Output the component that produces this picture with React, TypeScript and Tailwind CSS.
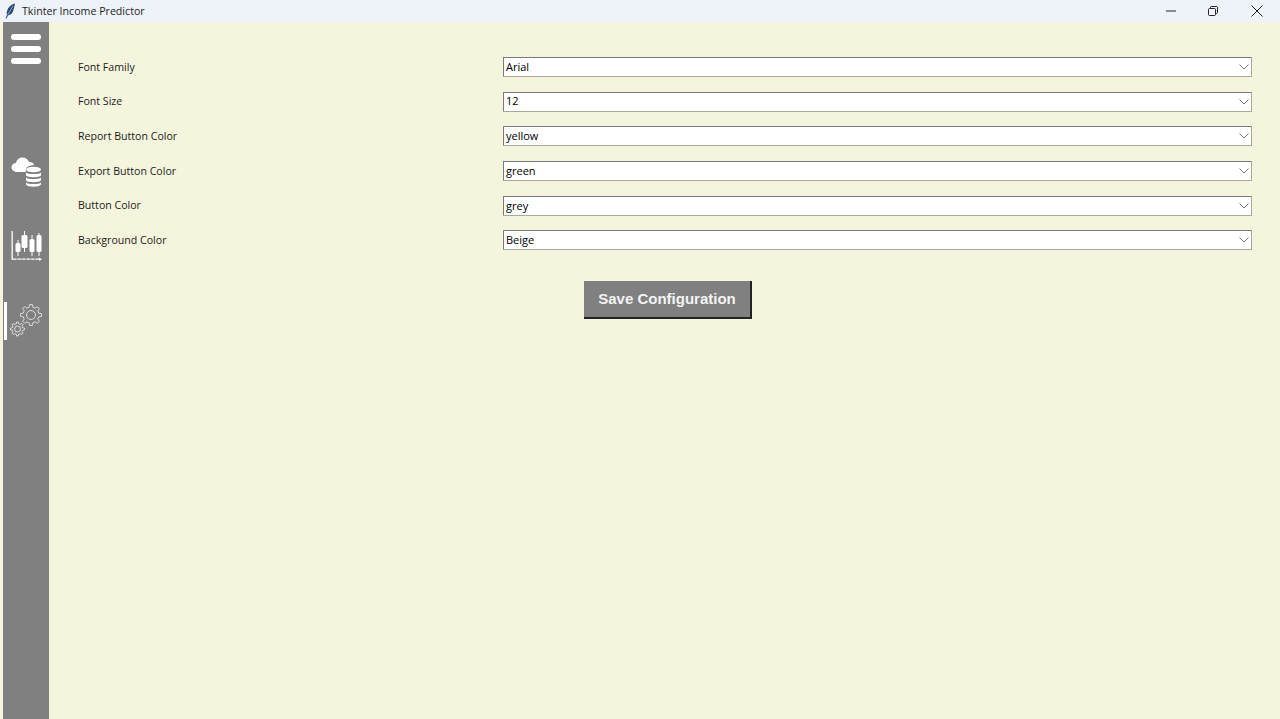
const fields = [
  { label: 'Font Family', value: 'Arial' },
  { label: 'Font Size', value: '12' },
  { label: 'Report Button Color', value: 'yellow' },
  { label: 'Export Button Color', value: 'green' },
  { label: 'Button Color', value: 'grey' },
  { label: 'Background Color', value: 'Beige' },
];

function Feather() {
  return (
    <svg width="12" height="16" viewBox="0 0 12 16">
      <path d="M11 0.5C7 1.5 4 4 3 8C2.6 9.8 2.6 11 3 12L1.5 15.5L2.5 15.5L4 12.5C7 12 9 9.5 9.8 6C10.2 4 10.8 2 11 0.5Z" fill="#2c4a78" />
      <path d="M9 3L3.5 12" stroke="#b9c7dc" strokeWidth="0.7" />
    </svg>
  );
}

function CloudDb() {
  return (
    <svg width="32" height="34" viewBox="0 0 32 34" fill="white">
      <path d="M6 18C2.5 18 0.5 15.800 0.500 13.300C0.500 10.800 2.500 9 5 9C5.700 5.500 8.500 3.500 11.500 3.500C14.500 3.500 17 5.300 18 8C20.500 7.800 22.500 9 23.200 11C18.500 11.300 15 13 14.800 15.500L14.800 18Z" />
      <ellipse cx="22.500" cy="15.500" rx="7.500" ry="2.800" />
      <path d="M15 18.500C16.500 20.500 28.500 20.500 30 18.500L30 21.500C28.500 23.800 16.500 23.800 15 21.500Z" />
      <path d="M15 23.500C16.500 25.500 28.500 25.500 30 23.500L30 26.500C28.500 28.800 16.500 28.800 15 26.500Z" />
      <path d="M15 28.500C16.500 30.500 28.500 30.500 30 28.500L30 30.500C28.500 33.500 16.500 33.500 15 30.500Z" />
    </svg>
  );
}

function Candles() {
  return (
    <svg width="32" height="32" viewBox="0 0 32 32" fill="white">
      <path d="M1.500 2H2.800V29.500H30V30.800H1.500Z" />
      <path d="M29 28.500L32 30.200L29 32Z" />
      <g stroke="white" strokeWidth="1">
        <path d="M8 11V27" />
        <path d="M14.500 2V23" />
        <path d="M22 6V27" />
        <path d="M29 4V27" />
      </g>
      <rect x="5.500" y="14" width="5" height="9" rx="1.500" />
      <rect x="11.500" y="6" width="6" height="13" rx="1.500" />
      <rect x="19.500" y="10" width="5" height="13" rx="1.500" />
      <rect x="26.500" y="6" width="5" height="17" rx="1.500" />
      <path d="M6 30H8M10.500 30H12.500M15 30H17M19.500 30H21.500M24 30H26" stroke="#808080" strokeWidth="0.800" />
    </svg>
  );
}

// outline of a cog: body radius with a flat tooth every 45deg
function gearPath(r: number) {
  const inner = r * 0.76;
  const pts: string[] = [];
  for (let i = 0; i < 8; i++) {
    const a = (i * Math.PI) / 4;
    const steps: [number, number][] = [
      [inner, -0.24],
      [r, -0.13],
      [r, 0.13],
      [inner, 0.24],
    ];
    for (const [rad, off] of steps) {
      const x = rad * Math.cos(a + off);
      const y = rad * Math.sin(a + off);
      pts.push(`${pts.length ? 'L' : 'M'}${x.toFixed(2)} ${y.toFixed(2)}`);
    }
  }
  return pts.join('') + 'Z';
}

function Gears() {
  return (
    <svg width="34" height="38" viewBox="0 0 34 38" fill="none" stroke="#f2f2f2" strokeWidth="0.800">
      <g transform="translate(21 13)">
        <path d={gearPath(10.500)} />
        <circle r="4.500" />
      </g>
      <g transform="translate(7.500 27)">
        <path d={gearPath(7)} />
        <circle r="3" />
      </g>
    </svg>
  );
}

function Chevron() {
  return (
    <svg width="10" height="6" viewBox="0 0 10 6" fill="none" stroke="#777" strokeWidth="1">
      <path d="M0.500 0.500L5 5L9.500 0.500" />
    </svg>
  );
}

export default function App() {
  return (
    <div className="flex h-[719px] w-[1280px] flex-col overflow-hidden bg-[#f5f4dc] font-['Open_Sans',sans-serif] text-[#1c1c1c]">
      <div className="flex h-[22px] shrink-0 items-center bg-[#eef3fa] pl-[4px]">
        <Feather />
        <span className="ml-[6px] pt-[1px] text-[10.650px] text-[#222]">Tkinter Income Predictor</span>
        <div className="ml-auto -mt-[1px] flex items-center text-[#222]">
          <svg width="10" height="10" viewBox="0 0 10 10" className="mr-[32px]">
            <path d="M0 5H10" stroke="#222" strokeWidth="1" />
          </svg>
          <svg width="10" height="10" viewBox="0 0 10 10" fill="none" stroke="#222" className="mr-[33px]">
            <rect x="0.500" y="2.500" width="7" height="7" rx="1" />
            <path d="M2.500 2.500V1.500C2.500 1 3 0.500 3.500 0.500H8C9 0.500 9.500 1 9.500 2V6.500C9.500 7 9 7.500 8.500 7.500H7.500" />
          </svg>
          <svg width="12" height="12" viewBox="0 0 12 12" stroke="#222" className="mr-[17px]">
            <path d="M0.500 0.500L11.500 11.500M11.500 0.500L0.500 11.500" />
          </svg>
        </div>
      </div>

      <div className="flex min-h-0 flex-1">
        <aside className="ml-[3px] flex w-[46px] shrink-0 flex-col items-center bg-[#808080]">
          <div className="mt-[12px] flex w-[30px] flex-col gap-[6px]">
            <div className="h-[6px] rounded-full bg-white" />
            <div className="h-[6px] rounded-full bg-white" />
            <div className="h-[6px] rounded-full bg-white" />
          </div>
          <div className="mt-[90px] ml-[1px]">
            <CloudDb />
          </div>
          <div className="mt-[41px] mr-[1px]">
            <Candles />
          </div>
          <div className="relative mt-[41px] ml-[1px]">
            <div className="absolute top-0 left-[-6px] h-[38px] w-[3px] bg-white" />
            <Gears />
          </div>
        </aside>

        <main className="flex-1 pt-[35px] pl-[29px]">
          <div className="flex flex-col gap-[14.700px]">
            {fields.map((f) => (
              <div key={f.label} className="flex h-[20px] items-center">
                <span className="w-[425px] shrink-0 pt-[1px] text-[10.600px]">{f.label}</span>
                <div className="flex h-[20px] w-[749px] items-center justify-between rounded-[1px] border border-[#7a7a7a] border-b-[#a9a79a] border-r-[#a9a79a] bg-white pr-[2px] pl-[2px] text-[11px] text-black">
                  <span>{f.value}</span>
                  <Chevron />
                </div>
              </div>
            ))}
          </div>
          <button className="mt-[31px] ml-[506px] flex h-[38px] w-[168px] items-center justify-center border-r-2 border-b-2 border-[#222] bg-[#808080] font-['Liberation_Sans',sans-serif] text-[15px] font-bold text-[#f4f4f4]">
            Save Configuration
          </button>
        </main>
      </div>
    </div>
  );
}
